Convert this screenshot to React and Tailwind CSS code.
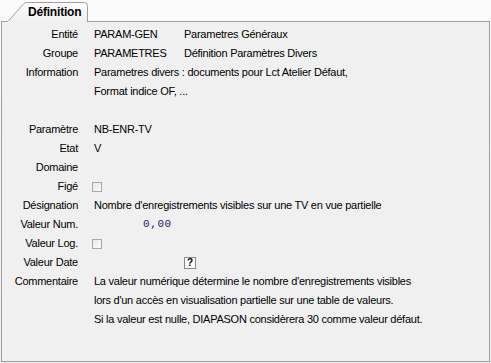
const rows = [
    { label: "Entité", value: "PARAM-GEN", extra: "Parametres Généraux" },
    { label: "Groupe", value: "PARAMETRES", extra: "Définition Paramètres Divers" },
    { label: "Information", value: "Parametres divers : documents pour Lct Atelier Défaut," },
    { label: "", value: "Format indice OF, ..." },
    { label: "", value: "" },
    { label: "Paramètre", value: "NB-ENR-TV" },
    { label: "Etat", value: "V" },
    { label: "Domaine", value: "" },
    { label: "Figé", type: "check" },
    { label: "Désignation", value: "Nombre d'enregistrements visibles sur une TV en vue partielle" },
    { label: "Valeur Num.", type: "num", value: "0,00" },
    { label: "Valeur Log.", type: "check" },
    { label: "Valeur Date", type: "date" },
    { label: "Commentaire", value: "La valeur numérique détermine le nombre d'enregistrements visibles" },
    { label: "", value: "lors d'un accès en visualisation partielle sur une table de valeurs." },
    { label: "", value: "Si la valeur est nulle, DIAPASON considèrera 30 comme valeur défaut." },
];

const CheckBox = () => (
    <span className="block w-[10px] h-[10px] -ml-[2px] border border-[#a8a8a8] bg-gradient-to-br from-[#e8e8e8] to-[#fafafa]" />
);

const Cell = ({ row }) => {
    if (row.type === "check") return <CheckBox />;
    if (row.type === "num") {
        return (
            <span className="ml-[49px] text-[#1a1a6a] tracking-[0.6px]" style={{ fontFamily: '"Liberation Mono", monospace' }}>
                {row.value}
            </span>
        );
    }
    if (row.type === "date") {
        return (
            <span className="ml-[90px] flex items-center justify-center w-[12px] h-[12px] border border-[#8a8a8a] bg-white text-[10px] font-bold leading-none tracking-normal">
                ?
            </span>
        );
    }
    return (
        <span className="flex whitespace-nowrap">
            <span className={row.extra ? "w-[90px]" : ""}>{row.value}</span>
            {row.extra && <span>{row.extra}</span>}
        </span>
    );
};

export default function App() {
    return (
        <div
            className="w-[491px] h-[363px] bg-gradient-to-b from-[#fbfbfb] to-[#ededed] text-[11px] text-black overflow-hidden"
            style={{ fontFamily: '"Liberation Sans", Arial, sans-serif' }}
        >
            {/* Tab */}
            <div className="relative ml-[7px] mt-[2px] w-[81px] h-[20px] z-10">
                <svg className="absolute inset-0" width="81" height="20" viewBox="0 0 81 20">
                    <defs>
                        <linearGradient id="tabg" x1="0" y1="0" x2="0" y2="1">
                            <stop offset="0" stopColor="#fdfdfd" />
                            <stop offset="1" stopColor="#f0f0f0" />
                        </linearGradient>
                    </defs>
                    <path d="M0.5 20 L15.5 3 Q17.5 0.5 20.5 0.5 L77.5 0.5 Q80.5 0.5 80.5 3.5 L80.5 20" fill="url(#tabg)" stroke="#a0a0a0" />
                    <rect x="1" y="19" width="79" height="2" fill="#f0f0f0" />
                </svg>
                <span className="absolute left-[21px] top-[3px] font-bold text-[12px] leading-[14px] tracking-[-0.2px]">Définition</span>
            </div>

            {/* Panel */}
            <div className="ml-[1px] -mt-[1px] w-[489px] h-[341px] bg-[#f0f0f0] border border-[#a0a0a0] pt-[3px] tracking-[-0.25px]">
                <div className="grid grid-cols-[76px_1fr] gap-x-[16px]">
                    {rows.map((row, i) => (
                        <div key={i} className="contents">
                            <div className="h-[19px] flex items-center justify-end whitespace-nowrap">{row.label}</div>
                            <div className="h-[19px] flex items-center">
                                <Cell row={row} />
                            </div>
                        </div>
                    ))}
                </div>
            </div>
        </div>
    );
}
